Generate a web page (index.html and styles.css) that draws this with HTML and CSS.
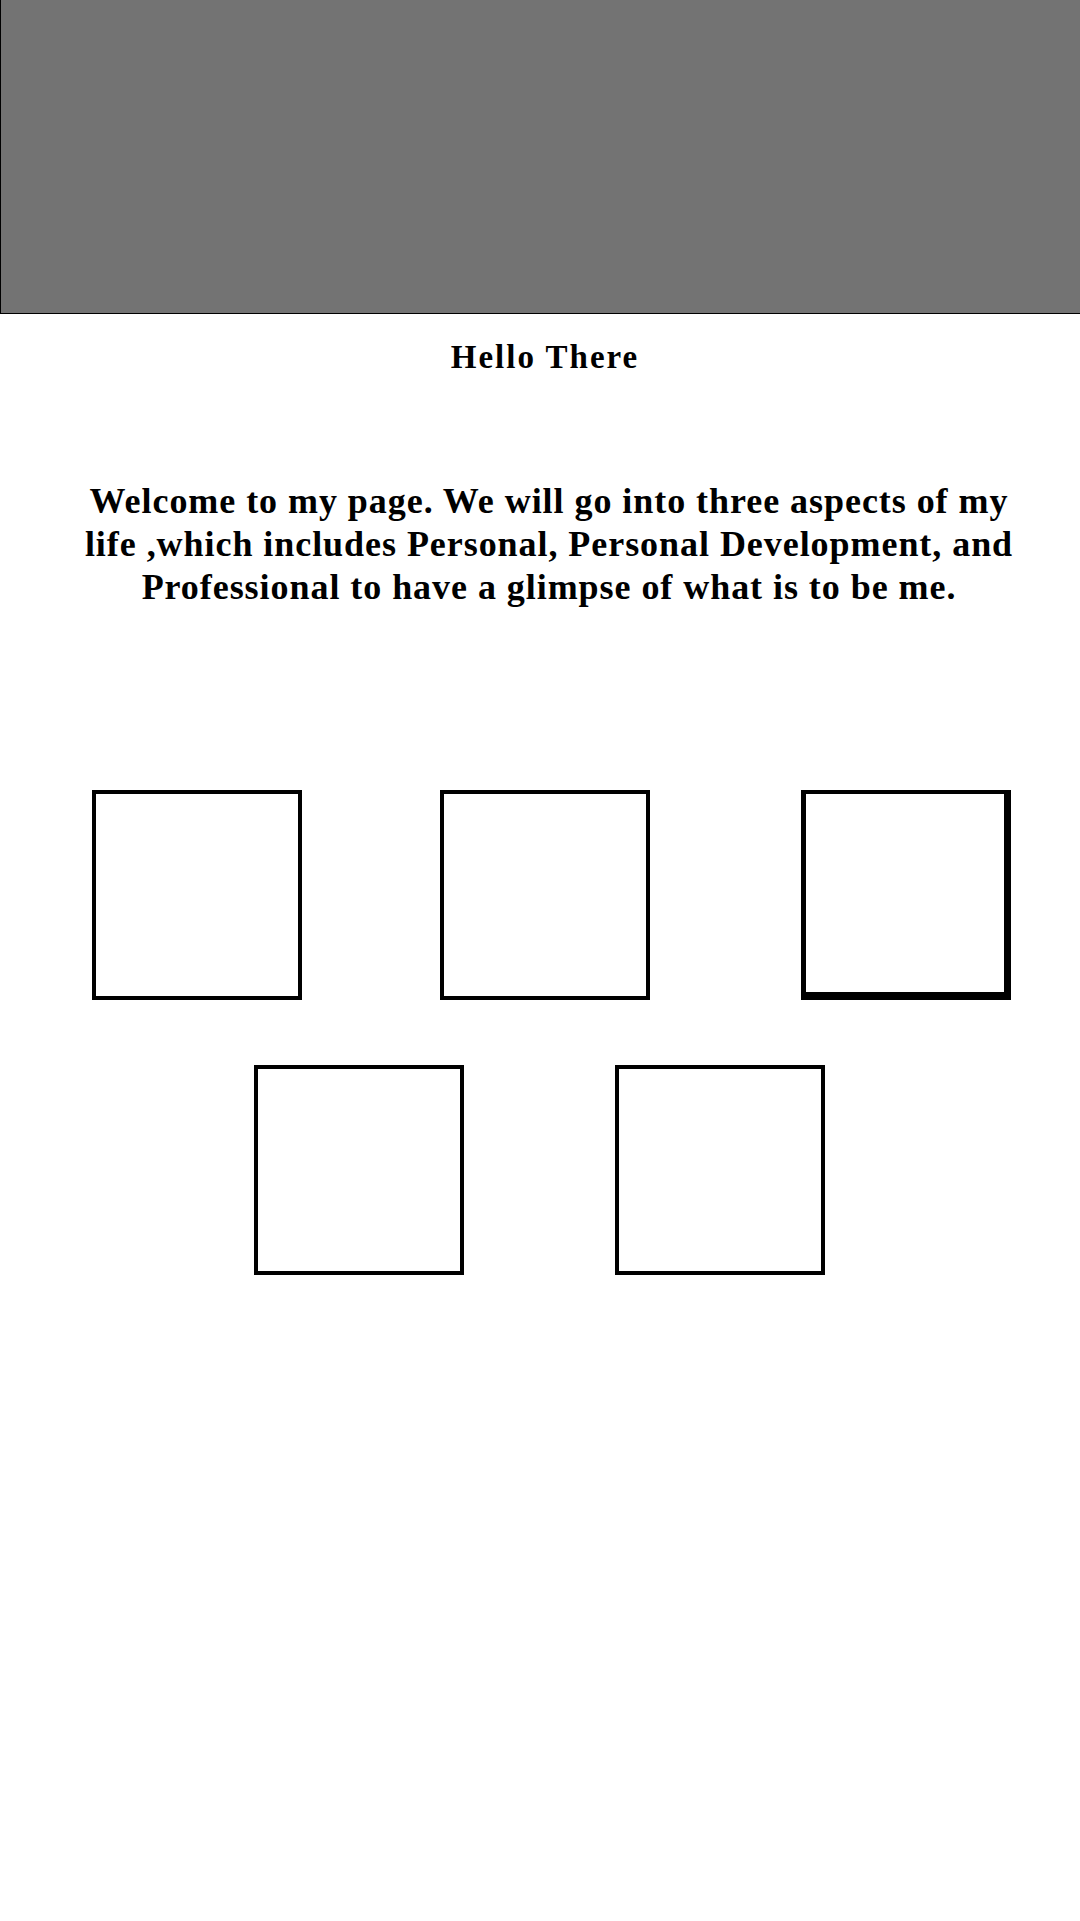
FILE: index.html
```html
<!DOCTYPE html>
<html lang="en">
<head>
  <meta charset="UTF-8">
  <meta name="viewport" content="width=device-width, initial-scale=1.0">
  <title>Hello There</title>
  <link rel="stylesheet" href="styles.css">
</head>
<body>

  <div class="banner"></div>

  <h1 class="greeting">Hello There</h1>

  <p class="intro">Welcome to my page. We will go into three aspects of my life ,which includes Personal, Personal Development, and Professional to have a glimpse of what is to be me.</p>

  <!-- cuadros de las secciones -->
  <div class="tiles">
    <div class="tile-row first-row">
      <div class="tile"></div>
      <div class="tile tile-mid"></div>
      <div class="tile tile-heavy"></div>
    </div>
    <div class="tile-row second-row">
      <div class="tile"></div>
      <div class="tile tile-next"></div>
    </div>
  </div>

</body>
</html>
```
FILE: styles.css
```css
body, html {
  margin: 0;
  padding: 0;
  background: #ffffff;
  color: #000000;
  font-family: "Liberation Serif", "DejaVu Serif", serif;
}

.banner {
  height: 313px;
  background-color: #737373;
  border-left: 1px solid #000;
  border-bottom: 1px solid #000;
}

.greeting {
  margin: 23px 0 0 0;
  padding-left: 10px;
  text-align: center;
  font-size: 33px;
  font-weight: bold;
  letter-spacing: 2px;
  line-height: 40px;
}

.intro {
  width: 960px;
  margin: 103px 0 0 69px;
  text-align: center;
  font-size: 36px;
  font-weight: bold;
  letter-spacing: 0.95px;
  line-height: 43px;
}

.tiles {
  margin-top: 181px;
  display: flex;
  flex-direction: column;
  gap: 65px;
}

.tile-row {
  display: flex;
}

.first-row {
  padding-left: 92px;
}

.second-row {
  padding-left: 254px;
}

.tile {
  width: 210px;
  height: 210px;
  box-sizing: border-box;
  border: 4px solid #000;
}

.tile-mid {
  margin-left: 138px;
}

.tile-heavy {
  margin-left: 151px;
  border-width: 4px 7px 8px 5px;
}

.tile-next {
  margin-left: 151px;
}
```
